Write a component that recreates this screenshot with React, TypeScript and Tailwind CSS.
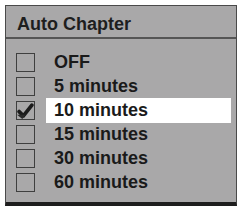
import React from 'react';

const options = ['OFF', '5 minutes', '10 minutes', '15 minutes', '30 minutes', '60 minutes'];
const selected = '10 minutes';

function CheckBox({ checked }: { checked: boolean }) {
  return (
    <div className="relative w-[19px] h-[19px] border-[1.5px] border-[#3f3f3f] shrink-0 overflow-hidden">
      {checked && (
        <svg viewBox="0 0 16 16" className="absolute inset-0 w-full h-full">
          <path d="M2 9 L6 13 L14 3" fill="none" stroke="#1c1c1c" strokeWidth="3.5" strokeLinecap="round" strokeLinejoin="round" />
          <path d="M0 12 L5 16 L8 12 Z" fill="#2a2a2a" />
        </svg>
      )}
    </div>
  );
}

export default function App() {
  return (
    <div className="w-[242px] h-[206px] bg-white pt-[5px] pl-[5px]" style={{ fontFamily: '"Liberation Sans", Arial, sans-serif' }}>
      <div className="w-[232px] h-[201px] bg-[#a9a8a9] border-t border-l border-r border-[#4a4a4a] border-b-[4px] border-b-[#1e1e1e] flex flex-col">
        <div className="h-[33px] pl-[11px] pt-[8px] text-[18px] leading-[20px] font-bold text-[#1e1e1e] border-b-2 border-[#555]">
          Auto Chapter
        </div>
        <div className="flex flex-col pt-[11px]">
          {options.map((o) => (
            <div key={o} className="h-[24px] flex items-center pl-[10px]">
              <CheckBox checked={o === selected} />
              <div
                className={
                  o === selected
                    ? 'ml-[11px] mr-[5px] flex-1 h-[25px] bg-white pl-[8px] flex items-center text-[18px] font-bold text-[#1a1a1a]'
                    : 'ml-[11px] mr-[5px] flex-1 h-[25px] pl-[8px] flex items-center text-[18px] font-bold text-[#1a1a1a]'
                }
              >
                {o}
              </div>
            </div>
          ))}
        </div>
      </div>
    </div>
  );
}
